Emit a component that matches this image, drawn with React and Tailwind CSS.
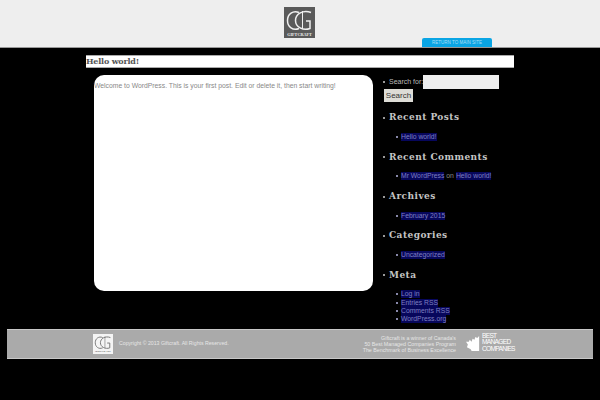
import React from "react";

const Logo = ({ dark }) => (
  <svg viewBox="0 0 31 31" className="w-full h-full">
    <rect width="31" height="31" fill={dark ? "#5a5a5a" : "#f4f4f4"} />
    <g fill="none" stroke={dark ? "#f0f0f0" : "#777"} strokeWidth="1.5">
      <path d="M15 5.5 C9 3 3.5 7 3.5 13.5 C3.5 20 9 24 15 21.5" />
      <path d="M27 5.5 C19 2.5 11.5 7 11.5 13.5 C11.5 20 19 24 26 21.5 L26 14 L22 14" />
      <path d="M18.5 4 L18.5 22" strokeWidth="1" />
    </g>
    <text x="15.5" y="28.5" textAnchor="middle" fontSize="4.2" fontWeight="700" fontFamily="'Liberation Serif', serif" fill={dark ? "#eee" : "#666"}>GIFTCRAFT</text>
  </svg>
);

const Widget = ({ title, items }) => (
  <div className="mb-[9px]">
    <div className="flex items-center h-[14px]">
      <span className="w-[2px] h-[2px] bg-[#999] mr-[4px]"></span>
      <h3 className="font-['DejaVu_Serif',serif] font-bold text-[9px] tracking-[0.45px] text-[#c4c4c4]">{title}</h3>
    </div>
    <ul className="mt-[8px]">
      {items.map((parts, i) => (
        <li key={i} className="flex items-center h-[8.33px] pl-[13px]">
          <span className="w-[2px] h-[2px] bg-[#8888aa] mr-[3px]"></span>
          {parts.map((p, j) =>
            p.link ? (
              <a key={j} className="bg-[#07075c] text-[#7f7fc0] text-[6.8px] leading-[8px]">{p.link}</a>
            ) : (
              <span key={j} className="text-[#888] text-[6.8px] leading-[8px] px-[2px]">{p.text}</span>
            )
          )}
        </li>
      ))}
    </ul>
  </div>
);

export default function App() {
  return (
    <div className="w-[600px] h-[400px] overflow-hidden bg-black font-['Liberation_Sans',sans-serif]">
      <header className="relative h-[48px] bg-[#eeeeee] border-b border-[#999] flex justify-center pt-[7px]">
        <div className="w-[31px] h-[31px] mr-[2px]">
          <Logo dark />
        </div>
        <a className="absolute left-[422px] top-[38px] w-[70px] h-[9px] rounded-t-[2px] bg-[#0aa5e4] text-[#a8def5] text-[4.5px] leading-[9px] text-center">RETURN TO MAIN SITE</a>
      </header>

      <div className="pl-[86px] pr-[86px] pt-[7px]">
        <h1 className="h-[13px] bg-white border-y border-[#aaa] font-['DejaVu_Serif',serif] font-bold text-[8px] leading-[11px] text-[#555] tracking-[-0.2px]">Hello world!</h1>
      </div>

      <main className="flex pl-[94px] pt-[7px] h-[253px]">
        <article className="w-[279px] h-[216px] bg-white rounded-[10px] text-[#888] text-[6.8px] leading-[10px] pt-[6px]">
          Welcome to WordPress. This is your first post. Edit or delete it, then start writing!
        </article>

        <aside className="ml-[10px] w-[125px]">
          <div className="flex items-center h-[14px]">
            <span className="w-[2px] h-[2px] bg-[#999] mr-[4px]"></span>
            <label className="text-[#bbb] text-[7px] w-[34px] whitespace-nowrap">Search for:</label>
            <input className="w-[76px] h-[14px] bg-[#eeeeee]" />
          </div>
          <button className="block w-[29px] h-[13px] ml-[1px] bg-[#dddcd6] text-[#333] text-[8px] leading-[13px] text-center">Search</button>
          <div className="mt-[9px]">
            <Widget title="Recent Posts" items={[[{ link: "Hello world!" }]]} />
            <Widget title="Recent Comments" items={[[{ link: "Mr WordPress" }, { text: "on" }, { link: "Hello world!" }]]} />
            <Widget title="Archives" items={[[{ link: "February 2015" }]]} />
            <Widget title="Categories" items={[[{ link: "Uncategorized" }]]} />
            <Widget title="Meta" items={[[{ link: "Log in" }], [{ link: "Entries RSS" }], [{ link: "Comments RSS" }], [{ link: "WordPress.org" }]]} />
          </div>
        </aside>
      </main>

      <footer className="relative mx-[7px] mt-[8px] w-[586px] h-[30px] bg-[#aaaaaa] border-y border-[#c8c8c8] flex items-center">
        <div className="w-[20px] h-[20px] ml-[86px] shrink-0">
          <Logo />
        </div>
        <p className="ml-[6px] text-[#e6e6e6] text-[5.2px]">Copyright © 2013 Giftcraft. All Rights Reserved.</p>
        <div className="ml-auto mr-[137px] text-right text-[#e6e6e6] text-[5.3px] leading-[6.2px]">
          <p>Giftcraft is a winner of Canada's</p>
          <p>50 Best Managed Companies Program</p>
          <p>The Benchmark of Business Excellence</p>
        </div>
        <div className="absolute left-[459px] top-[3px] flex items-center">
          <svg viewBox="0 0 16 16" className="w-[15px] h-[15px] mt-[3px]">
            <path d="M14 0 L14 16 L6 16 L5 14 L1 12 L2 9 L0 6 L3 6 L4 4 L6 6 L7 3 L9 4 L10 1 L12 2 Z" fill="#fff" />
          </svg>
          <div className="text-white text-[6.6px] leading-[6.3px] tracking-[-0.7px] ml-[1px]">
            <p>BEST</p>
            <p>MANAGED</p>
            <p>COMPANIES</p>
          </div>
        </div>
      </footer>
    </div>
  );
}
